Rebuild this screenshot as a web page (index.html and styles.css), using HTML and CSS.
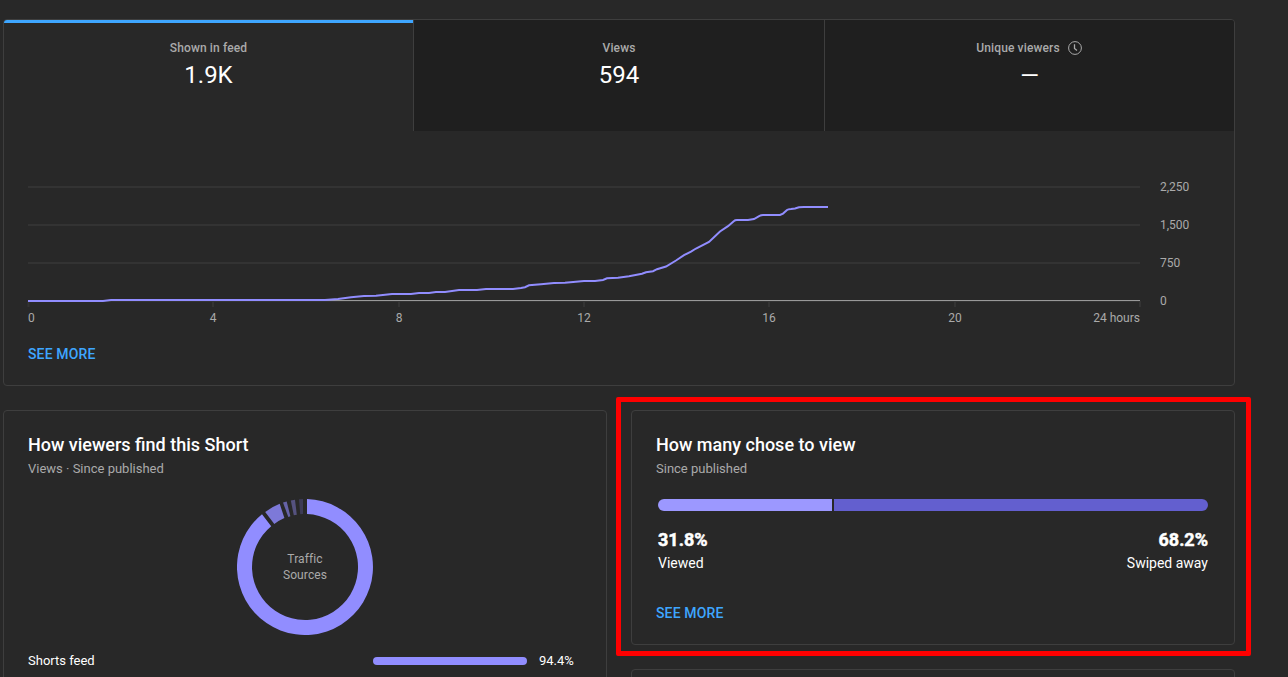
FILE: index.html
```html
<!DOCTYPE html>
<html lang="en">
<head>
<meta charset="utf-8">
<title>Short analytics</title>
<link rel="stylesheet" href="styles.css">
</head>
<body>
<main class="page">
  <section class="card overview">
    <div class="tabs">
      <div class="tab active"><div class="label">Shown in feed</div><div class="value">1.9K</div></div>
      <div class="tab"><div class="label">Views</div><div class="value">594</div></div>
      <div class="tab"><div class="label with-icon">Unique viewers
        <svg class="clock" width="14" height="14" viewBox="0 0 14 14"><circle cx="7" cy="7" r="6.4"/><path d="M6.5 3.3V7.4L9 9.4"/></svg></div><div class="value empty">—</div></div>
    </div>
    <svg class="chart" width="1170" height="150" viewBox="28 180 1170 150">
      <path class="grid" d="M28 187H1140M28 225H1140M28 263H1140"/>
      <path class="grid" d="M28 301H1140M28.5 301V307M213 301V307M399 301V307M584 301V307M769 301V307M955 301V307M1140 301V307"/>
      <path class="axis" d="M28 300.5H1140"/>
      <path class="line" d="M28 301H103L111 300H325L338 299L351 297.2L364 296L376 295.8L392 294H411L419 293.1L429 292.9L436 292.1L445 291.9L459 290.1H477L486 289H513L521 288L525 287.2L529 285.3L541 284.2L554 283.1L565 282.8L584 281H595L603 280L607 278.3L618 277.8L629 276.2L642 273.8L646 272.2L653 271.2L657 269.2L666 266.5L676 260.5L684 255.2L691 251.6L696 248.5L709 242L720 231.5L728 226.2L734 221Q735 220 737 220H748L754 219L760 215.6Q761 215 763 215H780L783 213.6L787 210Q788 209.3 791 209L795 208.5L799 207.3L804 207H828"/>
      <g class="ticks">
        <text x="28" y="322">0</text>
        <g text-anchor="middle"><text x="213" y="322">4</text><text x="399" y="322">8</text><text x="584" y="322">12</text><text x="769" y="322">16</text><text x="955" y="322">20</text></g>
        <text x="1140" y="322" text-anchor="end">24 hours</text>
        <text x="1160" y="191">2,250</text><text x="1160" y="229">1,500</text><text x="1160" y="267">750</text><text x="1160" y="305">0</text>
      </g>
    </svg>
    <a class="more">SEE MORE</a>
  </section>
  <div class="columns">
    <section class="card sources">
      <h2>How viewers find this Short</h2>
      <p class="sub">Views · Since published</p>
      <div class="donut">
        <svg width="136" height="136" viewBox="237 499 136 136">
          <path fill="#918dff" d="M307 499.03A68 68 0 1 1 262 514.3L271.2 526.2A53 53 0 1 0 307 514.04Z"/>
          <path fill="#7d79d8" d="M265.2 512.1A68 68 0 0 1 279.7 503.8L284.4 518A53 53 0 0 0 274.3 523.9Z"/>
          <path fill="#6663a7" d="M283 502.6L286.7 501.5L290.4 516.2L288.3 516.9Z"/>
          <path fill="#55527f" d="M290.8 500.5L295 499.8L296.8 514.7L293.8 515.3Z"/>
          <path fill="#3d3b55" d="M299 499.3L303 499V514.1L300.2 514.3Z"/>
        </svg>
        <div class="donut-label">Traffic<br>Sources</div>
      </div>
      <div class="source-row"><span class="source-name">Shorts feed</span><span class="source-bar"></span><span class="source-value">94.4%</span></div>
    </section>
    <div class="side">
      <section class="card chosen">
        <h2>How many chose to view</h2>
        <p class="sub">Since published</p>
        <div class="split"><span class="viewed"></span><span class="swiped"></span></div>
        <div class="results">
          <div><b>31.8%</b><span>Viewed</span></div>
          <div class="right"><b>68.2%</b><span>Swiped away</span></div>
        </div>
        <a class="more">SEE MORE</a>
        <div class="highlight"></div>
      </section>
      <section class="card next"></section>
    </div>
  </div>
</main>
</body>
</html>
```
FILE: styles.css
```css
* { box-sizing: border-box; }
body { margin: 0; background: #282828; color: #fff; font-family: Roboto, sans-serif; }
.page { height: 677px; padding: 19px 53px 0 3px; overflow: hidden; }
.card { border: 1px solid #3e3e3e; border-radius: 4px; }
.overview { height: 367px; display: flex; flex-direction: column; align-items: flex-start; }
.tabs { width: 100%; height: 111px; display: grid; grid-template-columns: 409px 411px 410px; border-radius: 3px 3px 0 0; overflow: hidden; }
.tab { background: #1f1f1f; border-left: 1px solid #3e3e3e; padding-top: 20px; text-align: center; }
.tab.active { background: #282828; border-left: 0; border-top: 3px solid #3ea6ff; padding-top: 17px; }
.label { display: flex; justify-content: center; align-items: center; gap: 8px; height: 16px; font-size: 12px; font-weight: 500; line-height: 16px; letter-spacing: 0.13px; color: #aaa; }
.label.with-icon { padding-right: 1px; }
.clock { fill: none; stroke: #aaa; stroke-width: 1; }
.clock path { stroke-width: 1.3; }
.value { margin-top: 3px; font-size: 24px; line-height: 32px; }
.value.empty { margin-top: 4px; }
.chart { display: block; margin: 49px 0 0 24px; overflow: visible; }
.grid { fill: none; stroke: #333; stroke-width: 2; }
.axis { stroke: #999; }
.line { fill: none; stroke: #918dff; stroke-width: 2; }
.ticks { fill: #aaa; font-size: 12px; }
.more { display: block; color: #3ea6ff; font-size: 14px; font-weight: 500; line-height: 20px; letter-spacing: 0.13px; }
.overview .more { margin: 14px 0 0 24px; }
.columns { display: grid; grid-template-columns: 604px 604px; gap: 24px; margin-top: 24px; }
.columns .card { padding: 21px 24px 0; }
h2 { margin: 0; font-size: 18px; font-weight: 500; line-height: 26px; }
.sub { margin: 2px 0 0; font-size: 13px; line-height: 18px; color: #aaa; }
.sources { height: 300px; }
.donut { display: grid; width: 136px; margin: 21px 0 0 209px; }
.donut > * { grid-area: 1 / 1; }
.donut-label { align-self: center; text-align: center; font-size: 12px; line-height: 16px; letter-spacing: 0.1px; color: #aaa; }
.source-row { display: flex; align-items: flex-start; height: 20px; margin-top: 16px; font-size: 13px; line-height: 20px; }
.source-name { width: 345px; }
.source-bar { width: 154px; height: 8px; margin-top: 6px; border-radius: 4px; background: #918dff; }
.source-value { margin-left: 12px; }
.side { display: grid; grid-template-rows: 235px 50px; gap: 24px; }
.chosen { position: relative; }
.split { display: flex; gap: 2px; width: 550px; height: 12px; margin: 21px 0 0 2px; }
.viewed { width: 174px; background: #9c98ff; border-radius: 6px 0 0 6px; }
.swiped { flex: 1; background: #635fcf; border-radius: 0 6px 6px 0; }
.results { display: flex; justify-content: space-between; width: 550px; margin: 17px 0 0 2px; }
.results b { display: block; font-size: 18px; font-weight: 700; line-height: 24px; -webkit-text-stroke: 0.5px #fff; }
.results span { display: block; font-size: 14px; line-height: 20px; margin-top: 1px; }
.right { text-align: right; }
.chosen .more { margin-top: 30px; }
.highlight { position: absolute; left: -16px; top: -14px; width: 635px; height: 259px; border: 5px solid #f00; border-radius: 2px; pointer-events: none; }
```
